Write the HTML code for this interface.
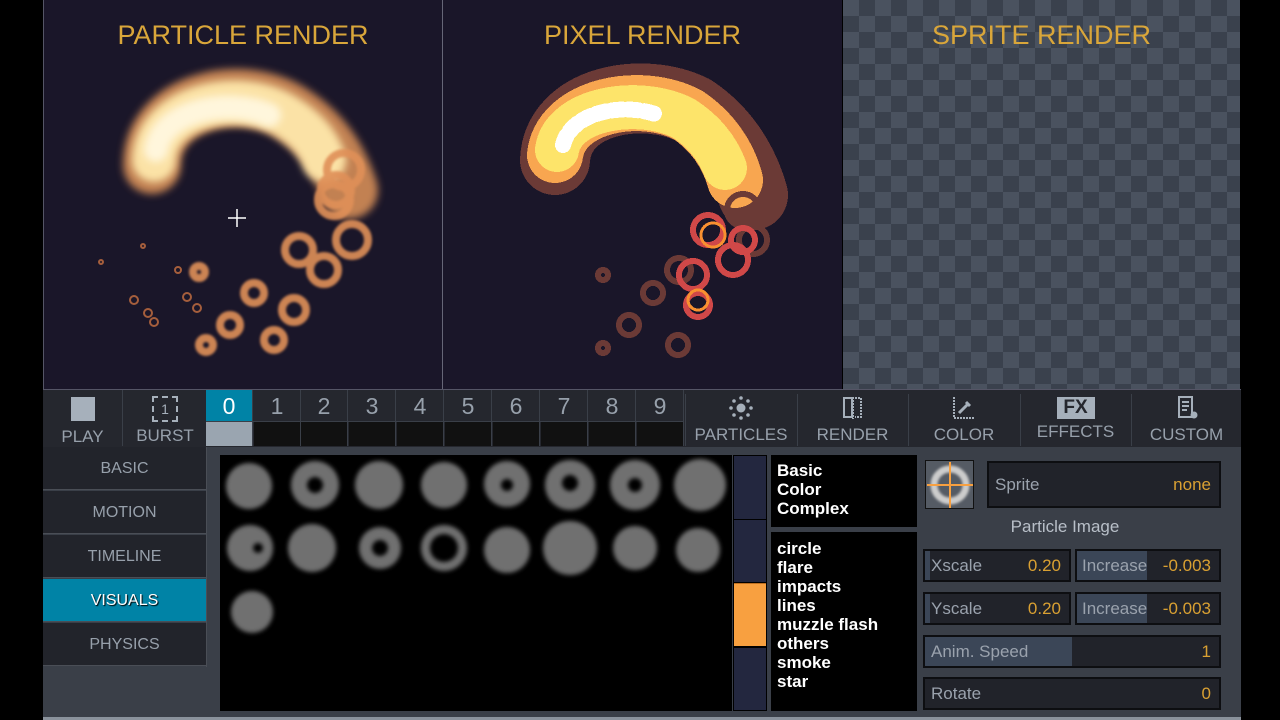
<!DOCTYPE html>
<html><head><meta charset="utf-8"><style>
*{margin:0;padding:0;box-sizing:border-box}
body{width:1280px;height:720px;background:#000;position:relative;overflow:hidden;font-family:"Liberation Sans","DejaVu Sans",sans-serif}
.a{position:absolute}
.title{position:absolute;top:20px;width:100%;text-align:center;color:#d9a63a;font-size:27px}
.panel{position:absolute;top:0;height:389px;background:#1a1629;overflow:hidden}
.tb{background:#25272e;color:#97a0ab;font-size:17px;text-align:center}
.dig{position:absolute;top:390px;width:47px;height:31px;color:#97a0ab;font-size:23px;text-align:center;line-height:32px;border-right:1px solid #3a3f48}
.slot{position:absolute;top:422px;width:47px;height:24px;background:#111;border-right:1px solid #3a3f48}
.menu{position:absolute;left:43px;width:163px;height:43px;background:#22242b;color:#97a0ab;font-size:16px;text-align:center;line-height:43px;border-bottom:1px solid #4a4e56}
.fld{position:absolute;background:#21232a;border:2px solid #0d0e11;color:#9aa2ad;font-size:17px;line-height:26px;padding:0 6px}
.fld .v{position:absolute;right:8px;top:0;color:#d9a032}
.bar{position:absolute;left:0;top:0;bottom:0;background:#3b4657}
.lst{position:absolute;background:#000;color:#fff;font-weight:bold;font-size:17px;line-height:19px;padding:6px 6px}
</style></head><body>
<svg width="0" height="0" style="position:absolute"><defs>
<filter id="b4" x="-60%" y="-60%" width="220%" height="220%"><feGaussianBlur stdDeviation="4"/></filter>
<filter id="b2" x="-30%" y="-30%" width="160%" height="160%"><feGaussianBlur stdDeviation="2"/></filter>
<filter id="b1" x="-30%" y="-30%" width="160%" height="160%"><feGaussianBlur stdDeviation="1.3"/></filter>
</defs></svg>
<!-- render panels -->
<div class="panel" style="left:44px;width:398px">
<svg width="398" height="389" class="a" style="left:0;top:0">
<g fill="none" stroke-linecap="round">
<path d="M108 165 C108 100 200 80 250 115 C280 135 295 160 305 190" stroke="#e0945a" stroke-width="58" filter="url(#b4)" opacity=".85"/>
<path d="M110 160 C112 105 195 88 240 115 C265 130 275 145 280 160" stroke="#fbe2a6" stroke-width="44" filter="url(#b4)"/>
<path d="M112 150 C118 110 185 98 225 115" stroke="#fff6dc" stroke-width="24" filter="url(#b4)"/>
</g>
<g fill="none" stroke="#e09058" stroke-width="8" filter="url(#b1)" opacity=".9"><circle cx="300" cy="170" r="17"/><circle cx="290" cy="200" r="16"/><circle cx="308" cy="240" r="16"/><circle cx="280" cy="270" r="14"/><circle cx="255" cy="250" r="14"/><circle cx="250" cy="310" r="12"/><circle cx="292" cy="190" r="15"/><circle cx="210" cy="293" r="10"/><circle cx="230" cy="340" r="10"/><circle cx="162" cy="345" r="7"/><circle cx="155" cy="272" r="6"/><circle cx="186" cy="325" r="10"/></g>
<g fill="none" stroke="#a55e3c" stroke-width="2"><circle cx="90" cy="300" r="4"/><circle cx="104" cy="313" r="4"/><circle cx="110" cy="322" r="4"/><circle cx="143" cy="297" r="4"/><circle cx="153" cy="308" r="4"/><circle cx="99" cy="246" r="2"/><circle cx="134" cy="270" r="3"/><circle cx="57" cy="262" r="2"/></g>
<path d="M193 209v18M184 218h18" stroke="#fff" stroke-width="1.5"/>
</svg><div class="title">PARTICLE RENDER</div></div>
<div class="panel" style="left:443px;width:399px">
<svg width="399" height="389" class="a" style="left:0;top:0" shape-rendering="crispEdges">
<g fill="none" stroke-linejoin="round" stroke-linecap="round">
<path d="M112 160 C115 100 200 85 250 110 C280 130 300 160 310 195" stroke="#6b3a36" stroke-width="70"/>
<path d="M112 155 C118 105 198 90 245 115 C270 132 285 155 292 180" stroke="#f8a650" stroke-width="56"/>
<path d="M114 150 C120 108 196 96 240 118 C262 132 275 150 282 168" stroke="#fde46a" stroke-width="44"/>
<path d="M120 145 C128 112 180 102 215 115" stroke="#fff" stroke-width="16" stroke-dasharray="10 6"/>
</g>
<g fill="none" stroke="#6b3a36" stroke-width="6"><circle cx="300" cy="210" r="16"/><circle cx="310" cy="240" r="14"/><circle cx="236" cy="270" r="12"/><circle cx="210" cy="293" r="10"/><circle cx="186" cy="325" r="10"/><circle cx="235" cy="345" r="10"/><circle cx="160" cy="348" r="5"/><circle cx="160" cy="275" r="5"/></g>
<g fill="none" stroke="#d04848" stroke-width="6"><circle cx="265" cy="230" r="15"/><circle cx="290" cy="260" r="15"/><circle cx="250" cy="275" r="14"/><circle cx="255" cy="305" r="12"/><circle cx="300" cy="240" r="12"/></g>
<g fill="none" stroke="#f89030" stroke-width="3"><circle cx="270" cy="235" r="12"/><circle cx="255" cy="300" r="10"/></g>
</svg><div class="title">PIXEL RENDER</div></div>
<div class="panel" style="left:843px;width:397px;background-color:#4a525f;background-image:linear-gradient(45deg,#3a414d 25%,transparent 25%,transparent 75%,#3a414d 75%),linear-gradient(45deg,#3a414d 25%,transparent 25%,transparent 75%,#3a414d 75%);background-size:32px 32px;background-position:0 0,16px 16px">
<div class="title">SPRITE RENDER</div></div>
<div class="a" style="left:43px;top:0;width:1px;height:389px;background:#556"></div>
<div class="a" style="left:442px;top:0;width:1px;height:389px;background:#667"></div>
<!-- toolbar -->
<div class="a" style="left:43px;top:389px;width:1198px;height:58px;background:#25272e;border-top:1px solid #556"></div>
<div class="a tb" style="left:43px;top:390px;width:80px;height:56px;border-right:1px solid #3a3f48"><div style="margin:7px auto 0;width:24px;height:24px;background:#a6b0bb"></div><div style="margin-top:6px">PLAY</div></div>
<div class="a tb" style="left:124px;top:390px;width:82px;height:56px"><div style="margin:6px auto 0;width:26px;height:26px;border:2px dashed #a6b0bb;font-size:14px;line-height:22px;color:#a6b0bb">1</div><div style="margin-top:4px">BURST</div></div>
<div class="dig" style="left:206px;background:#0083a6;color:#fff">0</div><div class="slot" style="left:206px;background:#9aa5b0"></div>
<div class="dig" style="left:254px">1</div><div class="slot" style="left:254px"></div>
<div class="dig" style="left:301px">2</div><div class="slot" style="left:301px"></div>
<div class="dig" style="left:349px">3</div><div class="slot" style="left:349px"></div>
<div class="dig" style="left:397px">4</div><div class="slot" style="left:397px"></div>
<div class="dig" style="left:445px">5</div><div class="slot" style="left:445px"></div>
<div class="dig" style="left:493px">6</div><div class="slot" style="left:493px"></div>
<div class="dig" style="left:541px">7</div><div class="slot" style="left:541px"></div>
<div class="dig" style="left:589px">8</div><div class="slot" style="left:589px"></div>
<div class="dig" style="left:637px">9</div><div class="slot" style="left:637px"></div>
<div class="a" style="left:206px;top:421px;width:478px;height:1px;background:#3a3f48"></div>
<div class="a tb" style="left:685px;top:394px;width:111px;height:52px;border-left:1px solid #3a3f48"><svg width="24" height="24" style="margin-top:2px"><circle cx="12" cy="12" r="4.5" fill="#a6b0bb"/><g fill="#a6b0bb"><circle cx="12" cy="2" r="1.8"/><circle cx="12" cy="22" r="1.8"/><circle cx="2" cy="12" r="1.8"/><circle cx="22" cy="12" r="1.8"/><circle cx="5" cy="5" r="1.8"/><circle cx="19" cy="5" r="1.8"/><circle cx="5" cy="19" r="1.8"/><circle cx="19" cy="19" r="1.8"/></g></svg><div>PARTICLES</div></div>
<div class="a tb" style="left:797px;top:394px;width:110px;height:52px;border-left:1px solid #3a3f48"><svg width="24" height="24" style="margin-top:2px"><rect x="3" y="2" width="8" height="19" fill="none" stroke="#a6b0bb" stroke-width="2"/><path d="M12 1v22M14 2h6v19h-6" stroke="#a6b0bb" stroke-width="2" fill="none" stroke-dasharray="2 1"/></svg><div>RENDER</div></div>
<div class="a tb" style="left:908px;top:394px;width:111px;height:52px;border-left:1px solid #3a3f48"><svg width="24" height="24" style="margin-top:2px"><path d="M2 1v21h20" stroke="#a6b0bb" stroke-width="2" fill="none" stroke-dasharray="2 1"/><path d="M7 17l9-9M14 6l4 4" stroke="#a6b0bb" stroke-width="3"/></svg><div>COLOR</div></div>
<div class="a tb" style="left:1020px;top:394px;width:110px;height:52px;border-left:1px solid #3a3f48"><div style="margin:3px auto 0;width:38px;height:22px;background:#a6b0bb;color:#25272e;font-weight:bold;font-size:19px;line-height:22px">FX</div><div style="margin-top:3px">EFFECTS</div></div>
<div class="a tb" style="left:1131px;top:394px;width:110px;height:52px;border-left:1px solid #3a3f48"><svg width="24" height="24" style="margin-top:2px"><rect x="4" y="1" width="13" height="20" fill="none" stroke="#a6b0bb" stroke-width="2"/><path d="M7 6h7M7 10h7M7 14h5" stroke="#a6b0bb" stroke-width="2"/><circle cx="19" cy="19" r="3.5" fill="#a6b0bb"/></svg><div>CUSTOM</div></div>
<!-- bottom -->
<div class="a" style="left:43px;top:447px;width:1198px;height:273px;background:#3a3f48"></div>
<div class="menu" style="top:447px">BASIC</div>
<div class="menu" style="top:491px">MOTION</div>
<div class="menu" style="top:535px">TIMELINE</div>
<div class="menu" style="top:579px;background:#0083a6;color:#fff;text-shadow:1px 1px 1px #000">VISUALS</div>
<div class="menu" style="top:623px">PHYSICS</div>
<div class="a" style="left:206px;top:447px;width:1px;height:220px;background:#4a4e56"></div>
<div class="a" style="left:220px;top:455px;width:512px;height:256px;background:#000">
<svg width="512" height="256">
<g fill="#707070" filter="url(#b2)">
<circle cx="29" cy="31" r="23"/><circle cx="95" cy="30" r="24"/><circle cx="159" cy="30" r="24"/><circle cx="224" cy="30" r="23"/><circle cx="287" cy="29" r="23"/><circle cx="350" cy="30" r="25"/><circle cx="415" cy="30" r="25"/><circle cx="480" cy="30" r="26"/>
<circle cx="30" cy="93" r="23"/><circle cx="92" cy="93" r="24"/><circle cx="160" cy="93" r="21"/><circle cx="224" cy="93" r="23"/><circle cx="287" cy="95" r="23"/><circle cx="350" cy="93" r="27"/><circle cx="415" cy="93" r="22"/><circle cx="478" cy="95" r="22"/>
<circle cx="32" cy="157" r="21"/></g>
<g fill="#000" filter="url(#b2)"><circle cx="95" cy="30" r="8"/><circle cx="350" cy="28" r="8"/><circle cx="415" cy="30" r="7"/><circle cx="287" cy="30" r="6"/><circle cx="224" cy="93" r="14"/><circle cx="160" cy="93" r="8"/><circle cx="38" cy="93" r="5"/></g>
</svg></div>
<div class="a" style="left:733px;top:455px;width:34px;height:256px;background:#000">
<div class="a" style="left:1px;top:1px;width:32px;height:63px;background:#23273f"></div>
<div class="a" style="left:1px;top:65px;width:32px;height:62px;background:#23273f"></div>
<div class="a" style="left:1px;top:128px;width:32px;height:63px;background:#f8a040;border-top:1px solid #c07020"></div>
<div class="a" style="left:1px;top:193px;width:32px;height:62px;background:#23273f"></div></div>
<div class="lst" style="left:771px;top:455px;width:146px;height:72px">Basic<br>Color<br>Complex</div>
<div class="lst" style="left:771px;top:532px;width:146px;height:179px;padding-top:7px">circle<br>flare<br>impacts<br>lines<br>muzzle flash<br>others<br>smoke<br>star</div>
<!-- right -->
<div class="a" style="left:925px;top:460px;width:49px;height:49px;background:#555b64;border:1px solid #111">
<svg width="47" height="47"><circle cx="24" cy="24" r="16" fill="none" stroke="#ccc" stroke-width="7" filter="url(#b1)"/><path d="M24 1v46M1 24h46" stroke="#f8a040" stroke-width="2"/></svg></div>
<div class="fld" style="left:987px;top:461px;width:234px;height:47px;line-height:43px;padding-left:6px">Sprite<span class="v" style="line-height:43px">none</span></div>
<div class="a" style="left:925px;top:517px;width:280px;text-align:center;color:#b8bfc8;font-size:17px">Particle Image</div>
<div class="fld" style="left:923px;top:549px;width:148px;height:33px;line-height:29px"><div class="bar" style="width:5px"></div><span style="position:relative">Xscale</span><span class="v" style="line-height:29px">0.20</span></div>
<div class="fld" style="left:1075px;top:549px;width:146px;height:33px;line-height:29px;padding-left:5px"><div class="bar" style="width:70px"></div><span style="position:relative">Increase</span><span class="v" style="line-height:29px">-0.003</span></div>
<div class="fld" style="left:923px;top:592px;width:148px;height:33px;line-height:29px"><div class="bar" style="width:5px"></div><span style="position:relative">Yscale</span><span class="v" style="line-height:29px">0.20</span></div>
<div class="fld" style="left:1075px;top:592px;width:146px;height:33px;line-height:29px;padding-left:5px"><div class="bar" style="width:70px"></div><span style="position:relative">Increase</span><span class="v" style="line-height:29px">-0.003</span></div>
<div class="fld" style="left:923px;top:635px;width:298px;height:33px;line-height:29px"><div class="bar" style="width:147px"></div><span style="position:relative">Anim. Speed</span><span class="v" style="line-height:29px">1</span></div>
<div class="fld" style="left:923px;top:677px;width:298px;height:33px;line-height:29px"><span style="position:relative">Rotate</span><span class="v" style="line-height:29px">0</span></div>
<div class="a" style="left:43px;top:717px;width:1198px;height:3px;background:#8a929c"></div>
</body></html>
